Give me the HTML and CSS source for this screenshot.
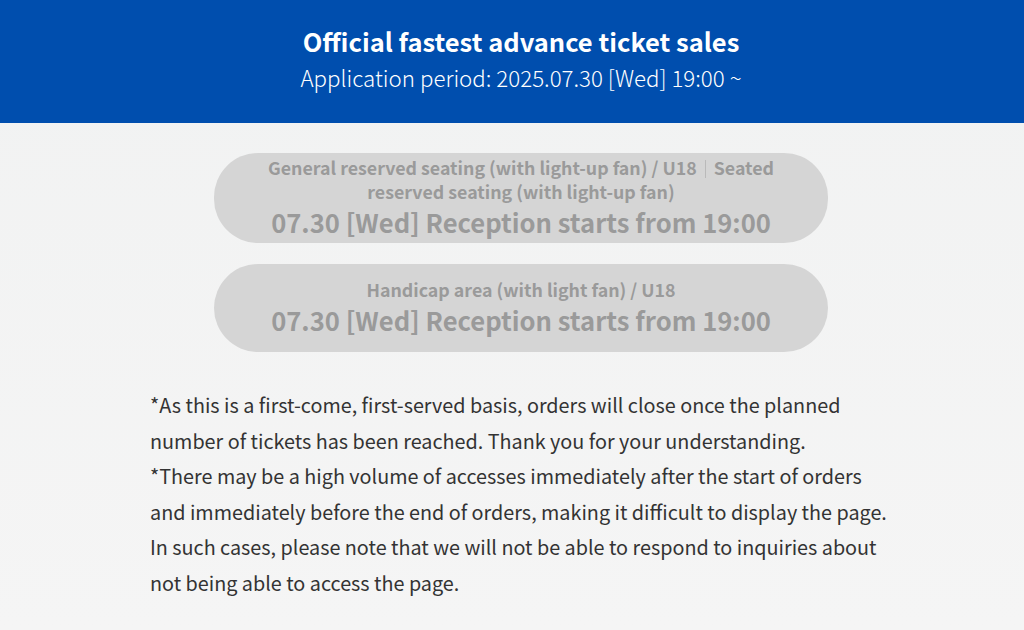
FILE: index.html
```html
<!DOCTYPE html>
<html lang="en">

<head>
    <meta charset="UTF-8">
    <meta name="viewport" content="width=device-width, initial-scale=1.0">
    <title>Advance ticket sales</title>
    <link rel="stylesheet" href="styles.css">
</head>

<body>
    <header class="header">
        <h1 class="header-title">Official fastest advance ticket sales</h1>
        <p class="header-period">Application period: 2025.07.30 [Wed] 19:00 ~</p>
    </header>

    <main class="content">
        <div class="pill">
            <p class="pill-seat">General reserved seating (with light-up fan) / U18<span class="sep"></span>Seated reserved seating (with light-up fan)</p>
            <p class="pill-date">07.30 [Wed] Reception starts from 19:00</p>
        </div>
        <div class="pill">
            <p class="pill-seat">Handicap area (with light fan) / U18</p>
            <p class="pill-date">07.30 [Wed] Reception starts from 19:00</p>
        </div>

        <div class="notes">
            <p>*As this is a first-come, first-served basis, orders will close once the planned number of tickets has been reached. Thank you for your understanding.</p>
            <p>*There may be a high volume of accesses immediately after the start of orders and immediately before the end of orders, making it difficult to display the page. In such cases, please note that we will not be able to respond to inquiries about not being able to access the page.</p>
        </div>
    </main>
</body>

</html>
```

FILE: styles.css
```css
/* General Reset */
* {
    margin: 0;
    padding: 0;
    box-sizing: border-box;
}

body {
    font-family: "Noto Sans CJK JP", "Noto Sans", sans-serif;
    background: linear-gradient(180deg, #f1f2f2 0%, #f5f5f5 100%);
    color: #333;
    min-height: 100vh;
}

.header {
    background: #004eae;
    color: #fff;
    text-align: center;
    height: 123px;
    padding: 23px 0 0 18px;
}

.header-title {
    font-size: 25.5px;
    font-weight: 700;
    line-height: 36px;
}

.header-period {
    font-size: 22.3px;
    font-weight: 300;
    line-height: 32px;
    margin-top: 2px;
}

.content {
    display: flex;
    flex-direction: column;
    align-items: center;
    padding: 30px 0 0 18px;
}

.pill {
    width: 614px;
    min-height: 88px;
    background: #d5d5d5;
    border-radius: 44px;
    display: flex;
    flex-direction: column;
    justify-content: center;
    align-items: center;
    text-align: center;
    color: #9a9a9a;
    font-weight: 700;
    padding: 2px 36px;
    margin-bottom: 21px;
}

.pill-seat {
    font-size: 17.8px;
    line-height: 24px;
}

/* thin divider between seat types */
.sep {
    display: inline-block;
    width: 1px;
    height: 18px;
    background: #bababa;
    vertical-align: -3px;
    margin: 0 8px;
}

.pill-date {
    font-size: 25.6px;
    line-height: 38px;
}

.notes {
    width: 742px;
    margin-top: 14px;
    font-size: 19.8px;
    line-height: 35.6px;
    color: #333;
}
```
